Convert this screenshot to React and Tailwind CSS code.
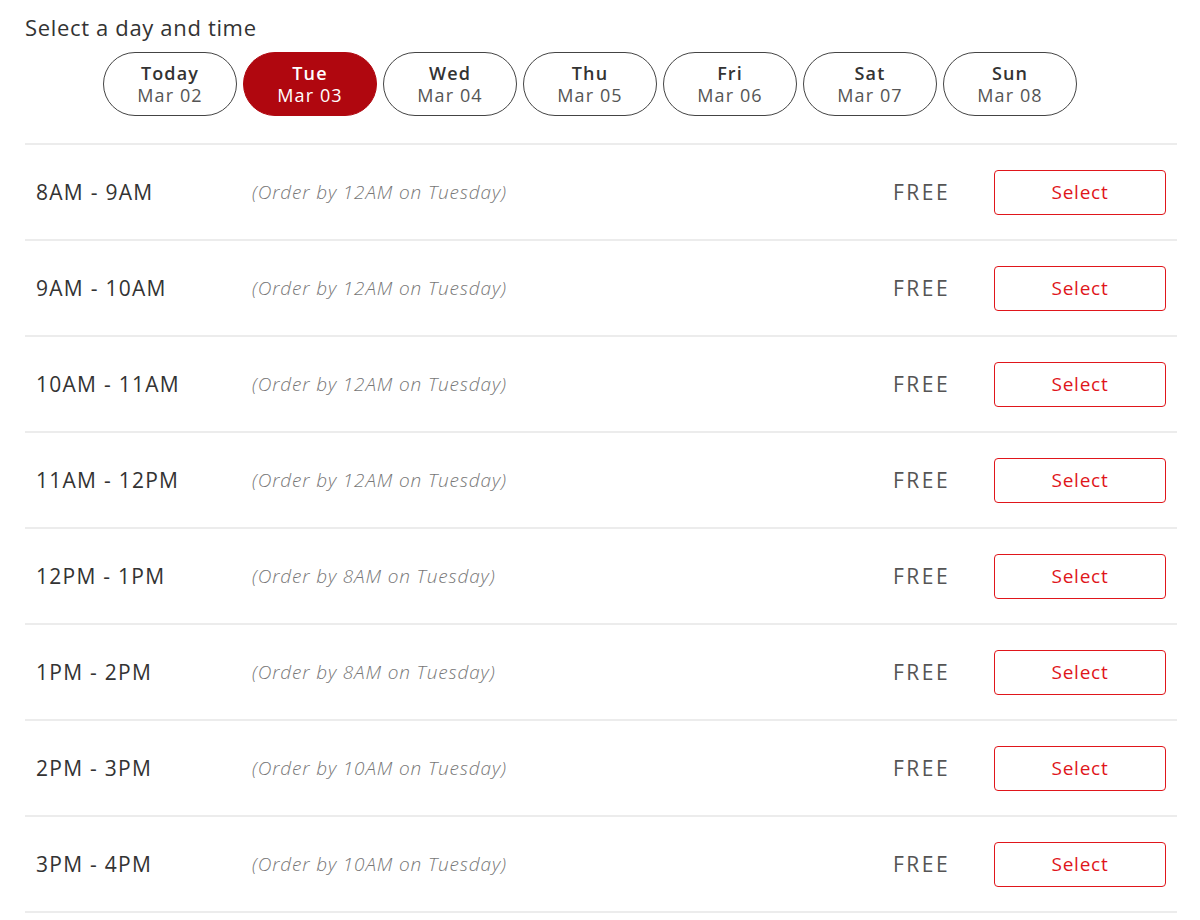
const days = [
  { day: 'Today', date: 'Mar 02' },
  { day: 'Tue', date: 'Mar 03', active: true },
  { day: 'Wed', date: 'Mar 04' },
  { day: 'Thu', date: 'Mar 05' },
  { day: 'Fri', date: 'Mar 06' },
  { day: 'Sat', date: 'Mar 07' },
  { day: 'Sun', date: 'Mar 08' },
];

const slots = [
  { time: '8AM - 9AM', cutoff: '12AM' },
  { time: '9AM - 10AM', cutoff: '12AM' },
  { time: '10AM - 11AM', cutoff: '12AM' },
  { time: '11AM - 12PM', cutoff: '12AM' },
  { time: '12PM - 1PM', cutoff: '8AM' },
  { time: '1PM - 2PM', cutoff: '8AM' },
  { time: '2PM - 3PM', cutoff: '10AM' },
  { time: '3PM - 4PM', cutoff: '10AM' },
];

export default function App() {
  return (
    <div className="min-h-[920px] bg-white pl-[25px] pr-[23px] pt-[13px] font-['Open_Sans',sans-serif]">
      <h2 className="text-[22px] leading-[28px] tracking-[0.03em] text-[#333]">Select a day and time</h2>

      <div className="ml-[78px] mt-[11px] flex gap-[6px]">
        {days.map((d) => (
          <button
            key={d.date}
            className={`flex h-[64px] w-[134px] flex-col items-center justify-center gap-[1px] rounded-full border-[1.5px] tracking-[0.07em] ${
              d.active ? 'border-[#b0070f] bg-[#b0070f] text-white' : 'border-[#444] bg-white text-[#333]'
            }`}
          >
            <span className="text-[18px] font-semibold leading-[21px]">{d.day}</span>
            <span className={`text-[18px] leading-[21px] ${d.active ? 'text-white' : 'text-[#555]'}`}>{d.date}</span>
          </button>
        ))}
      </div>

      <div className="mt-[27px] border-t-2 border-[#ececec]">
        {slots.map((s) => (
          <div key={s.time} className="flex h-[96px] items-center border-b-2 border-[#ececec] pt-[1px]">
            <div className="w-[227px] pl-[11px] text-[21px] font-medium tracking-[0.06em] text-[#333]">{s.time}</div>
            <div className="flex-1 text-[19px] font-light italic tracking-[0.045em] text-[#777]">
              (Order by {s.cutoff} on Tuesday)
            </div>
            <div className="w-[101px] text-[21px] tracking-[0.12em] text-[#555]">FREE</div>
            <button className="mr-[11px] h-[45px] w-[172px] rounded-[4px] border border-[#e0161b] text-[19px] font-medium tracking-[0.04em] text-[#e0161b]">
              Select
            </button>
          </div>
        ))}
      </div>
    </div>
  );
}
